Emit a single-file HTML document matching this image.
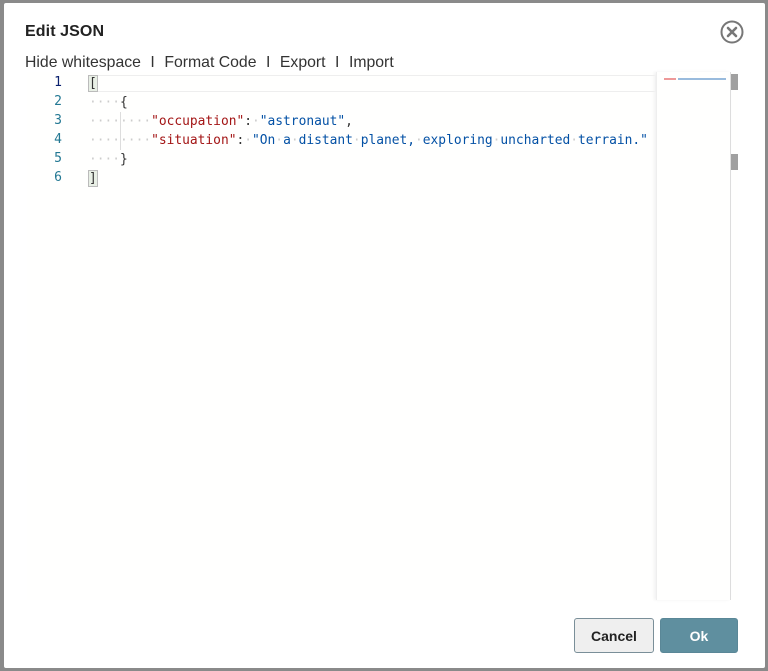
<!DOCTYPE html>
<html><head><style>
body{margin:0;width:768px;height:671px;background:#8a8a8a;position:relative;overflow:hidden;font-family:"Liberation Sans",sans-serif}
.dlg{position:absolute;left:4px;top:3px;width:761px;height:665px;background:#fff;border-radius:2px}
.title{position:absolute;left:21px;top:20px;font-size:16px;color:#222;font-weight:bold;letter-spacing:.1px}
.menu{position:absolute;left:21px;top:51px;font-size:15.8px;color:#333}
.menu span{margin:0 9.5px}
.ed{position:absolute;left:23px;top:69px;width:711px;height:528px;background:#fffffe}
.gut{position:absolute;left:0;top:0;width:61px}
.ln{position:absolute;right:26px;width:30px;text-align:right;font:13px "DejaVu Sans Mono",monospace;color:#237893}
.code{position:absolute;left:61px;top:0;width:568px;height:528px}
.row{position:absolute;left:1px;height:19px;font:12.9px/19px "DejaVu Sans Mono",monospace;color:#333;white-space:pre}
.k{color:#a31515}.s{color:#0451a5}.d{color:#ccc}
.cur{position:absolute;left:0;top:3px;width:568px;height:17px;border:1px solid #eee;box-sizing:border-box}
.mini{position:absolute;left:629px;top:0;width:74px;height:528px;border-left:1px solid #eee;box-shadow:-2px 0 3px #f2f2f2}
.sb{position:absolute;left:703px;top:0;width:8px;height:528px;border-left:1px solid #ddd}
.btn{position:absolute;top:615px;height:35px;border-radius:3px;font-size:14px;font-weight:bold;text-align:center;line-height:35px;box-sizing:border-box}
</style></head><body>
<div class="dlg">
<div class="title">Edit JSON</div>
<svg style="position:absolute;left:716px;top:17px" width="24" height="24" viewBox="0 0 24 24"><circle cx="12" cy="12" r="10.5" fill="none" stroke="#777" stroke-width="2"/><path d="M8 8L16 16M16 8L8 16" stroke="#777" stroke-width="2.6" stroke-linecap="round"/></svg>
<div class="menu">Hide whitespace<span>I</span>Format Code<span>I</span>Export<span>I</span>Import</div>
<div class="ed">
<div class="gut">
<div class="ln" style="top:3px;color:#0b216f">1</div>
<div class="ln" style="top:22px">2</div>
<div class="ln" style="top:41px">3</div>
<div class="ln" style="top:60px">4</div>
<div class="ln" style="top:79px">5</div>
<div class="ln" style="top:98px">6</div>
</div>
<div class="code">
<div class="cur"></div>
<div class="row" style="top:2px"><span style="background:#e8efe5;outline:1px solid #bbb">[</span></div>
<div class="row" style="top:21px"><span class="d">····</span>{</div>
<div class="row" style="top:40px"><span class="d">········</span><span class="k">"occupation"</span>:<span class="d">·</span><span class="s">"astronaut"</span>,</div>
<div class="row" style="top:59px"><span class="d">········</span><span class="k">"situation"</span>:<span class="d">·</span><span class="s">"On<span class="d">·</span>a<span class="d">·</span>distant<span class="d">·</span>planet,<span class="d">·</span>exploring<span class="d">·</span>uncharted<span class="d">·</span>terrain."</span></div>
<div class="row" style="top:78px"><span class="d">····</span>}</div>
<div class="row" style="top:97px"><span style="background:#e8efe5;outline:1px solid #bbb">]</span></div>
<div style="position:absolute;left:32px;top:40px;width:1px;height:38px;background:#ddd"></div>
</div>
<div class="mini"><div style="position:absolute;left:7px;top:6px;width:12px;height:2px;background:#e99"></div><div style="position:absolute;left:21px;top:6px;width:48px;height:2px;background:#9bd"></div></div>
<div class="sb"><div style="position:absolute;left:0;top:2px;width:7px;height:16px;background:#a0a0a0"></div><div style="position:absolute;left:0;top:82px;width:7px;height:16px;background:#a0a0a0"></div></div>
</div>
<div class="btn" style="left:570px;width:80px;background:#efefef;border:1px solid #7a8f99;color:#222">Cancel</div>
<div class="btn" style="left:656px;width:78px;background:#5f8f9f;border:1px solid #5a8797;color:#fff">Ok</div>
</div>
</body></html>
